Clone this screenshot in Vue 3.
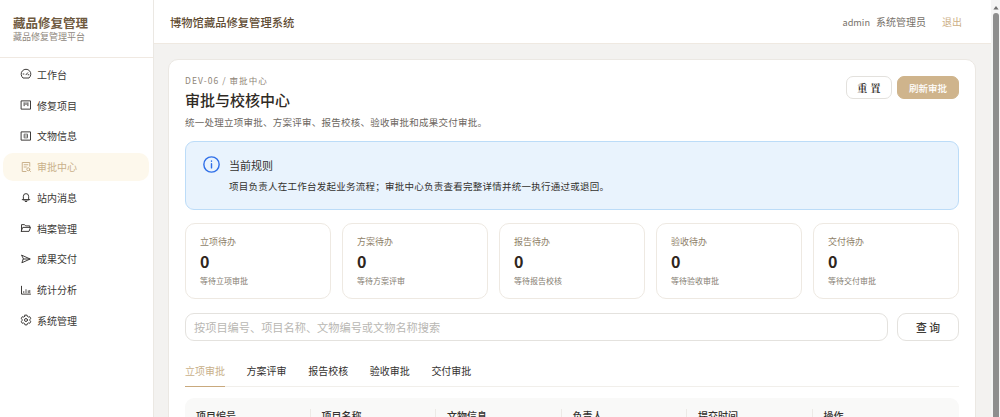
<script setup>
const nav = [
  { label: '工作台', icon: 'gauge' },
  { label: '修复项目', icon: 'board' },
  { label: '文物信息', icon: 'box' },
  { label: '审批中心', icon: 'doc', active: true },
  { label: '站内消息', icon: 'bell' },
  { label: '档案管理', icon: 'folder' },
  { label: '成果交付', icon: 'send' },
  { label: '统计分析', icon: 'chart' },
  { label: '系统管理', icon: 'gear' }
]
const stats = [
  { t: '立项待办', s: '等待立项审批' },
  { t: '方案待办', s: '等待方案评审' },
  { t: '报告待办', s: '等待报告校核' },
  { t: '验收待办', s: '等待验收审批' },
  { t: '交付待办', s: '等待交付审批' }
]
const tabs = ['立项审批', '方案评审', '报告校核', '验收审批', '交付审批']
const cols = ['项目编号', '项目名称', '文物信息', '负责人', '提交时间', '操作']
</script>

<template>
  <div class="app">
    <aside class="side">
      <div class="brand">
        <div class="brand-t">藏品修复管理</div>
        <div class="brand-s">藏品修复管理平台</div>
      </div>
      <nav class="nav">
        <div v-for="n in nav" :key="n.label" class="nav-item" :class="{ active: n.active }">
          <svg class="ico" viewBox="0 0 16 16" fill="none" stroke="currentColor" stroke-width="1.3" stroke-linecap="round" stroke-linejoin="round">
            <template v-if="n.icon === 'gauge'">
              <path d="M3.6 13a6.5 6.5 0 1 1 8.8 0z" />
              <path d="M8 9l2.2-2.6M4.2 8h1M10.8 9h1" />
            </template>
            <template v-else-if="n.icon === 'board'">
              <rect x="2" y="2.5" width="12" height="11" />
              <path d="M5.5 5v4M8 5v2.5M10.5 5v4" />
            </template>
            <template v-else-if="n.icon === 'box'">
              <rect x="2" y="2.5" width="12" height="11" />
              <path d="M6 5.5h4v5H6zM6 8h4" stroke-width="0.9" />
            </template>
            <template v-else-if="n.icon === 'doc'">
              <path d="M13 7V2H3v12h5" />
              <path d="M5.5 5h5M5.5 8h3" />
              <circle cx="11" cy="11" r="2" />
              <path d="M12.5 12.5L14 14" />
            </template>
            <template v-else-if="n.icon === 'bell'">
              <path d="M4.5 11.5V7a3.5 3.5 0 0 1 7 0v4.5zM3 11.5h10M7 14h2" />
            </template>
            <template v-else-if="n.icon === 'folder'">
              <path d="M2 12.5V3.5h4l1.5 1.7H13v2" />
              <path d="M2 12.5h10l2-5.3H4.2z" />
            </template>
            <template v-else-if="n.icon === 'send'">
              <path d="M2.5 3l11 5-11 5 1.8-5zM4.3 8h9" />
            </template>
            <template v-else-if="n.icon === 'chart'">
              <path d="M2 3v10.5h12" />
              <path d="M5 11.5V10M8 11.5V7.5M11 11.5V9M13 11.5V8.5" stroke-width="1.1" />
            </template>
            <template v-else>
              <path d="M6.6 2h2.8l.4 1.7 1.5.9 1.7-.5 1.4 2.4-1.3 1.2v1.6l1.3 1.2-1.4 2.4-1.7-.5-1.5.9-.4 1.7H6.6l-.4-1.7-1.5-.9-1.7.5-1.4-2.4 1.3-1.2V7.7L1.6 6.5 3 4.1l1.7.5 1.5-.9z" transform="translate(0 -.5)" />
              <circle cx="8" cy="8" r="2" />
            </template>
          </svg>
          <span>{{ n.label }}</span>
        </div>
      </nav>
    </aside>

    <div class="right">
      <header class="top">
        <div class="top-t">博物馆藏品修复管理系统</div>
        <div class="top-r">
          <span class="user">admin</span>
          <span class="role">系统管理员</span>
          <span class="logout">退出</span>
        </div>
      </header>

      <main class="main">
        <section class="card">
          <div class="head">
            <div>
              <div class="crumb">DEV-06 / 审批中心</div>
              <h1 class="title">审批与校核中心</h1>
              <p class="desc">统一处理立项审批、方案评审、报告校核、验收审批和成果交付审批。</p>
            </div>
            <div class="actions">
              <button class="btn">重 置</button>
              <button class="btn primary">刷新审批</button>
            </div>
          </div>

          <div class="notice">
            <svg class="info" viewBox="0 0 18 18" fill="none" stroke="#2f6fe8" stroke-width="1.5" stroke-linecap="round">
              <circle cx="9" cy="9" r="8.1" />
              <path d="M9 8.2v4.4M9 5.3v.3" />
            </svg>
            <div>
              <div class="notice-t">当前规则</div>
              <div class="notice-d">项目负责人在工作台发起业务流程；审批中心负责查看完整详情并统一执行通过或退回。</div>
            </div>
          </div>

          <div class="stats">
            <div v-for="s in stats" :key="s.t" class="stat">
              <div class="stat-t">{{ s.t }}</div>
              <div class="stat-n">0</div>
              <div class="stat-s">{{ s.s }}</div>
            </div>
          </div>

          <div class="search">
            <div class="input">按项目编号、项目名称、文物编号或文物名称搜索</div>
            <button class="query">查 询</button>
          </div>

          <div class="tabs">
            <div v-for="(t, i) in tabs" :key="t" class="tab" :class="{ on: i === 0 }">{{ t }}</div>
          </div>

          <div class="table">
            <div v-for="c in cols" :key="c" class="th">{{ c }}</div>
          </div>
        </section>
      </main>
    </div>

    <div class="bar">
      <svg class="arrow" viewBox="0 0 8 6"><path d="M4 1L7.5 5.5H.5z" fill="#6f6f6f" /></svg>
      <div class="thumb"></div>
    </div>
  </div>
</template>

<style>
html, body { margin: 0; height: 100%; overflow: hidden; }
</style>

<style scoped>
.app {
  display: flex;
  width: 1000px;
  height: 417px;
  overflow: hidden;
  font-family: "Noto Sans CJK SC", "Noto Sans", sans-serif;
  color: #2d2a26;
  background: #f3f2f0;
}
.side {
  flex: 0 0 154px;
  box-sizing: border-box;
  background: #fff;
  border-right: 1px solid #ebe8e3;
}
.brand {
  height: 58px;
  box-sizing: border-box;
  padding: 15px 0 0 13px;
  border-bottom: 1px solid #f0e9e2;
}
.brand-t { font-size: 12.5px; line-height: 16px; font-weight: 700; color: #6f5a3f; }
.brand-s { font-size: 9px; line-height: 12px; color: #8f887e; }
.nav { display: flex; flex-direction: column; gap: 2.75px; padding: 2.4px 4px 0 3px; }
.nav-item {
  display: flex;
  align-items: center;
  gap: 5px;
  height: 28px;
  padding-left: 17px;
  border-radius: 10px;
  font-size: 10px;
  color: #3a3835;
}
.nav-item.active { background: #fdf8ec; color: #c9b08a; }
.ico { width: 12px; height: 12px; flex: none; }
.right { flex: 1; min-width: 0; display: flex; flex-direction: column; }
.top {
  flex: 0 0 44px;
  box-sizing: border-box;
  display: flex;
  align-items: center;
  justify-content: space-between;
  padding: 0 29px 0 16px;
  background: #fff;
  border-bottom: 1px solid #efe9e1;
}
.top-t { font-size: 11.3px; font-weight: 500; color: #5f4c33; }
.top-r { display: flex; align-items: center; font-size: 10px; color: #77716a; }
.user { font-size: 9.2px; }
.role { margin-left: 6px; }
.logout { margin-left: 16px; color: #cdb088; }
.main { flex: 1; min-height: 0; overflow: hidden; padding: 15px 15px 0 14px; }
.card {
  height: 500px;
  box-sizing: border-box;
  padding: 15px 16px 0;
  background: #fff;
  border: 1px solid #ebe8e3;
  border-radius: 10px;
}
.head { display: flex; justify-content: space-between; align-items: flex-start; }
.crumb { font-size: 8.5px; line-height: 11px; letter-spacing: 1.05px; color: #8f8578; }
.title { margin: 3px 0 0; font-size: 15px; line-height: 21px; font-weight: 500; color: #2f2a24; }
.desc { margin: 5px 0 0; font-size: 9.5px; line-height: 14px; color: #6d675f; letter-spacing: .25px; }
.actions { display: flex; gap: 5px; margin-top: 1px; }
.btn {
  width: 46px;
  height: 23px;
  padding: 0;
  box-sizing: border-box;
  border: 1px solid #e3e1dd;
  border-radius: 7px;
  background: #fff;
  font: 700 10px "Noto Serif CJK SC", "Noto Sans CJK SC", sans-serif;
  letter-spacing: .4px;
  color: #3b3835;
}
.btn.primary {
  width: 62px;
  border-color: #cfb48c;
  background: #cfb48c;
  color: #fff;
  letter-spacing: 0;
  font: 500 9.5px "Noto Sans CJK SC", sans-serif;
}
.notice {
  display: flex;
  gap: 9px;
  height: 69px;
  box-sizing: border-box;
  margin-top: 12px;
  padding: 15px 17px;
  background: #e9f3fd;
  border: 1px solid #bcdcf8;
  border-radius: 9px;
}
.info { width: 17px; height: 17px; flex: none; margin-top: -1px; }
.notice-t { font-size: 11px; line-height: 17px; color: #33312e; margin-top: 0; }
.notice-d { margin-top: 5px; font-size: 9.5px; line-height: 14px; color: #33312e; letter-spacing: .25px; }
.stats { display: grid; grid-template-columns: repeat(5, 1fr); gap: 11px; margin-top: 13px; }
.stat {
  height: 76px;
  box-sizing: border-box;
  padding: 12px 14px 0;
  border: 1px solid #eee9e2;
  border-radius: 10px;
}
.stat-t { font-size: 9px; line-height: 12px; color: #8f7f69; }
.stat-n { margin-top: 3px; font-size: 16px; line-height: 20px; font-weight: 700; color: #2e261c; }
.stat-s { margin-top: 4px; font-size: 8px; line-height: 12px; color: #857d72; }
.search { display: flex; gap: 9px; margin-top: 14px; }
.input {
  flex: 1;
  height: 28px;
  box-sizing: border-box;
  padding: 0 8px;
  border: 1px solid #e4e2de;
  border-radius: 9px;
  font-size: 11.2px;
  line-height: 26px;
  color: #b9b7b3;
}
.query {
  width: 62px;
  height: 28px;
  box-sizing: border-box;
  padding: 0;
  border: 1px solid #e4e2de;
  border-radius: 9px;
  background: #fff;
  font: 500 10.8px "Noto Sans CJK SC", sans-serif;
  color: #3f3c38;
}
.tabs {
  display: flex;
  gap: 21.6px;
  margin-top: 20px;
  border-bottom: 1px solid #f1efeb;
}
.tab { height: 25px; font-size: 10px; line-height: 20px; color: #34322f; }
.tab.on { color: #c9b08a; border-bottom: 1px solid #c9a97d; margin-bottom: -1px; }
.table {
  display: flex;
  height: 40px;
  margin-top: 11px;
  background: #f9f9f8;
  border-radius: 9px 9px 0 0;
  padding-top: 11px;
  box-sizing: border-box;
}
.th { flex: 0 0 125.5px; box-sizing: border-box; padding-left: 11px; font-size: 10px; font-weight: 500; line-height: 14px; color: #34322f; border-right: 1px solid #eceae6; height: 18px; }
.th:last-child { border-right: 0; }
.bar {
  flex: 0 0 9px;
  display: flex;
  flex-direction: column;
  align-items: center;
  background: #f5f5f5;
}
.arrow { width: 6px; height: 5px; margin-top: 5px; flex: none; }
.thumb { width: 6px; flex: 1; margin-top: 3px; background: #8e8e8e; border-radius: 3px 3px 0 0; }
</style>
